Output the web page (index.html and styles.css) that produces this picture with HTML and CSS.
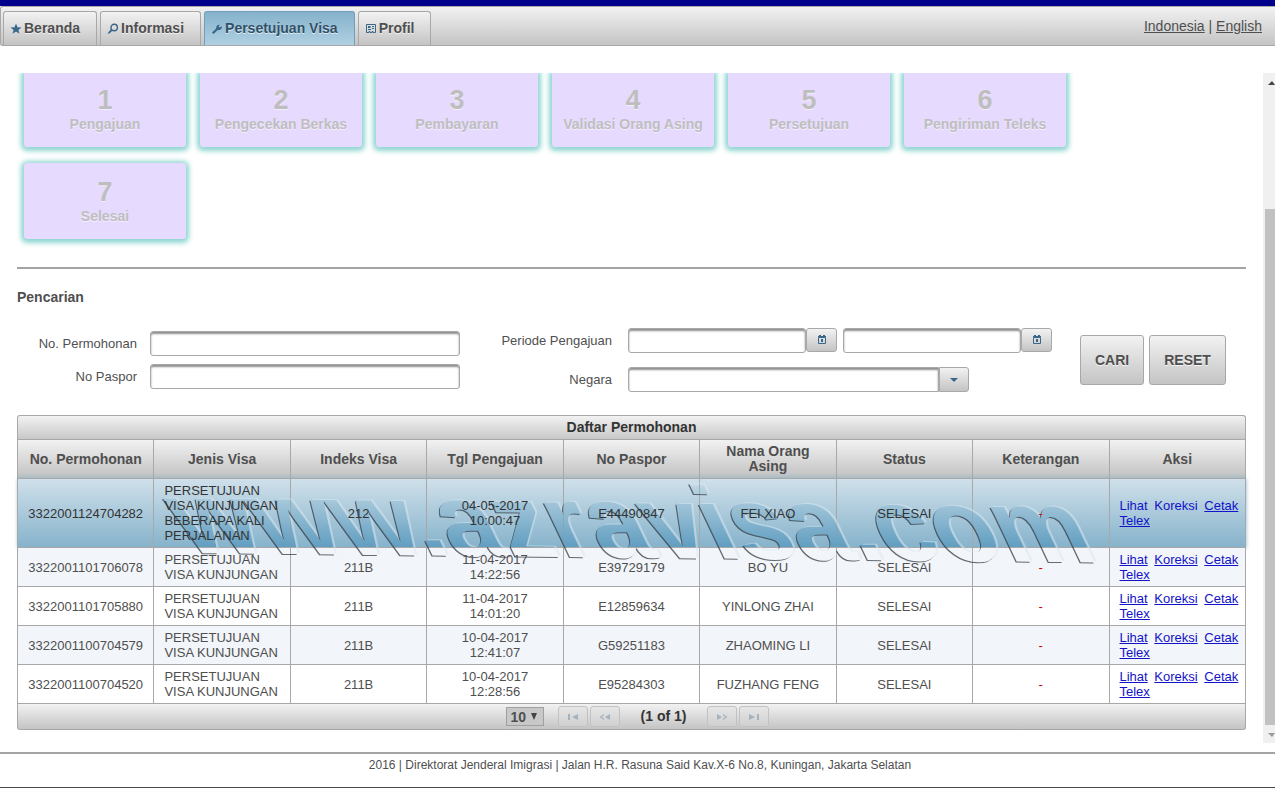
FILE: index.html
```html
<!DOCTYPE html>
<html lang="id">
<head>
<meta charset="utf-8">
<title>Persetujuan Visa</title>
<link rel="stylesheet" href="styles.css">
</head>
<body>
<div class="banner"></div>
<header class="menubar">
  <nav class="tabs">
    <a class="tab" href="#"><svg class="icon" viewBox="0 0 12 12"><path d="M6 0.5 7.5 4.2 11.5 4.4 8.4 6.9 9.5 10.8 6 8.6 2.5 10.8 3.6 6.9 0.5 4.4 4.5 4.2Z"/></svg>Beranda</a>
    <a class="tab" href="#"><svg class="icon" viewBox="0 0 12 12"><circle cx="7.2" cy="4.5" r="3.2" fill="none" stroke="#38678a" stroke-width="1.4"/><path d="M4 6 5.5 7.6 2.5 10.5 0.5 10.5Z"/></svg>Informasi</a>
    <a class="tab active" href="#" aria-current="page"><svg class="icon" viewBox="0 0 12 12"><path d="M1 9.5 5.2 5.6C4.8 3.5 6.3 1.4 8.8 1.8L7.6 3.4 8.8 4.5 11 3.2C11.2 6 9 7.5 6.8 7L2.5 11Z"/></svg>Persetujuan Visa</a>
    <a class="tab" href="#"><svg class="icon" viewBox="0 0 12 12"><path fill="none" stroke="#38678a" d="M1.5 1.5H10.500V9.500H8V8.500H7V9.500H5V8.500H4V9.500H1.500Z"/><path d="M3 3H5.500V5H3ZM3 6H6V7H3ZM7 3H9V4H7ZM7 5H9V6H7Z"/></svg>Profil</a>
  </nav>
  <div class="languages"><a href="#">Indonesia</a> | <a href="#">English</a></div>
</header>

<div class="viewport">
  <main class="content">
    <ol class="steps">
      <li class="step"><b>1</b><span>Pengajuan</span></li>
      <li class="step"><b>2</b><span>Pengecekan Berkas</span></li>
      <li class="step"><b>3</b><span>Pembayaran</span></li>
      <li class="step"><b>4</b><span>Validasi Orang Asing</span></li>
      <li class="step"><b>5</b><span>Persetujuan</span></li>
      <li class="step"><b>6</b><span>Pengiriman Teleks</span></li>
      <li class="step"><b>7</b><span>Selesai</span></li>
    </ol>
    <hr class="rule">
    <h2 class="heading">Pencarian</h2>
    <form class="search">
      <div class="fields fields-left">
        <label for="permohonan">No. Permohonan</label><input class="field" id="permohonan" type="text">
        <label for="paspor">No Paspor</label><input class="field" id="paspor" type="text">
      </div>
      <div class="fields fields-right">
        <label for="mulai">Periode Pengajuan</label>
        <div class="group">
          <input class="field date" id="mulai" type="text"><button class="trigger calendar" type="button" aria-label="Tanggal mulai"><svg viewBox="0 0 10 10"><path fill="none" stroke="#38678a" d="M1.500 2.500H8.500V8.500H1.500ZM1 1.500H9"/><path d="M2 0H4V2H2ZM6 0H8V2H6ZM4 4H6V7H4Z"/></svg></button>
          <input class="field date second" type="text" aria-label="Tanggal akhir"><button class="trigger calendar" type="button" aria-label="Pilih tanggal akhir"><svg viewBox="0 0 10 10"><path fill="none" stroke="#38678a" d="M1.500 2.500H8.500V8.500H1.500ZM1 1.500H9"/><path d="M2 0H4V2H2ZM6 0H8V2H6ZM4 4H6V7H4Z"/></svg></button>
        </div>
        <label for="negara">Negara</label>
        <div class="group">
          <input class="field combo" id="negara" type="text"><button class="trigger drop" type="button" aria-label="Buka daftar negara"><svg viewBox="0 0 10 10"><path d="M1 3H9L5 7Z"/></svg></button>
        </div>
      </div>
      <div class="actions">
        <button class="button" type="button">CARI</button>
        <button class="button" type="button">RESET</button>
      </div>
    </form>

    <section class="results">
      <table class="grid">
        <caption>Daftar Permohonan</caption>
        <thead>
          <tr><th>No. Permohonan</th><th>Jenis Visa</th><th>Indeks Visa</th><th>Tgl Pengajuan</th><th>No Paspor</th><th>Nama Orang Asing</th><th>Status</th><th>Keterangan</th><th>Aksi</th></tr>
        </thead>
        <tbody>
          <tr class="selected"><td>3322001124704282</td><td class="text">PERSETUJUAN VISA KUNJUNGAN BEBERAPA KALI PERJALANAN</td><td>212</td><td>04-05-2017 10:00:47</td><td>E44490847</td><td>FEI XIAO</td><td>SELESAI</td><td class="note">-</td><td class="links"><a class="plain" href="#">Lihat</a> <a class="plain" href="#">Koreksi</a> <a href="#">Cetak Telex</a></td></tr>
          <tr><td>3322001101706078</td><td class="text">PERSETUJUAN VISA KUNJUNGAN</td><td>211B</td><td>11-04-2017 14:22:56</td><td>E39729179</td><td>BO YU</td><td>SELESAI</td><td class="note">-</td><td class="links"><a href="#">Lihat</a> <a href="#">Koreksi</a> <a href="#">Cetak Telex</a></td></tr>
          <tr><td>3322001101705880</td><td class="text">PERSETUJUAN VISA KUNJUNGAN</td><td>211B</td><td>11-04-2017 14:01:20</td><td>E12859634</td><td>YINLONG ZHAI</td><td>SELESAI</td><td class="note">-</td><td class="links"><a href="#">Lihat</a> <a href="#">Koreksi</a> <a href="#">Cetak Telex</a></td></tr>
          <tr><td>3322001100704579</td><td class="text">PERSETUJUAN VISA KUNJUNGAN</td><td>211B</td><td>10-04-2017 12:41:07</td><td>G59251183</td><td>ZHAOMING LI</td><td>SELESAI</td><td class="note">-</td><td class="links"><a href="#">Lihat</a> <a href="#">Koreksi</a> <a href="#">Cetak Telex</a></td></tr>
          <tr><td>3322001100704520</td><td class="text">PERSETUJUAN VISA KUNJUNGAN</td><td>211B</td><td>10-04-2017 12:28:56</td><td>E95284303</td><td>FUZHANG FENG</td><td>SELESAI</td><td class="note">-</td><td class="links"><a href="#">Lihat</a> <a href="#">Koreksi</a> <a href="#">Cetak Telex</a></td></tr>
        </tbody>
      </table>
      <div class="pager">
        <div class="size"><select aria-label="Baris per halaman"><option>10</option></select><svg viewBox="0 0 8 8"><path d="M1 0H7L4 7Z"/></svg></div>
        <div class="pages">
          <button type="button" disabled aria-label="Halaman pertama"><svg viewBox="0 0 12 8"><path d="M1 1H3V7H1ZM11 1V7L5 4Z"/></svg></button>
          <button type="button" disabled aria-label="Sebelumnya"><svg viewBox="0 0 12 8"><path d="M11 1V7L6 4ZM5 1V2.500L2.500 4 5 5.500V7L0.500 4Z"/></svg></button>
        </div>
        <span class="count">(1 of 1)</span>
        <div class="pages">
          <button type="button" disabled aria-label="Berikutnya"><svg viewBox="0 0 12 8"><path d="M1 1V7L6 4ZM7 1V2.500L9.500 4 7 5.500V7L11.500 4Z"/></svg></button>
          <button type="button" disabled aria-label="Halaman terakhir"><svg viewBox="0 0 12 8"><path d="M11 1H9V7H11ZM1 1V7L7 4Z"/></svg></button>
        </div>
      </div>
      <svg class="watermark" width="1060" height="140" viewBox="0 0 1060 140">
        <defs>
          <linearGradient id="tint" x1="0" y1="0" x2="0" y2="1">
            <stop offset="0" stop-color="#8fbcd4" stop-opacity=".2"/>
            <stop offset="1" stop-color="#5597bd" stop-opacity=".75"/>
          </linearGradient>
          <clipPath id="letters">
            <text class="mark" transform="translate(65 95) rotate(.6) skewX(26)">www.azravisa.com</text>
          </clipPath>
          <filter id="emboss" x="-5%" y="-30%" width="110%" height="160%" color-interpolation-filters="sRGB">
            <feOffset in="SourceAlpha" dx="-1" dy="1" result="low"/>
            <feComposite in="low" in2="SourceAlpha" operator="out" result="lowEdge"/>
            <feFlood flood-color="#26313a" flood-opacity=".7"/>
            <feComposite in2="lowEdge" operator="in" result="dark"/>
            <feOffset in="SourceAlpha" dx="2" dy="-1" result="high"/>
            <feComposite in="high" in2="SourceAlpha" operator="out" result="highEdge"/>
            <feFlood flood-color="#d8e8f2" flood-opacity=".5"/>
            <feComposite in2="highEdge" operator="in" result="light"/>
            <feMerge><feMergeNode in="light"/><feMergeNode in="dark"/></feMerge>
          </filter>
        </defs>
        <rect y="28" width="1060" height="61" fill="url(#tint)" clip-path="url(#letters)"/>
        <g filter="url(#emboss)">
          <text class="mark" transform="translate(65 95) rotate(.6) skewX(26)">www.azravisa.com</text>
        </g>
      </svg>
    </section>
  </main>
  <div class="scrollbar" aria-hidden="true">
    <svg viewBox="0 0 12 12"><path fill="#444" d="M5 9H12L9 5Z"/></svg>
    <div class="thumb"></div>
    <svg viewBox="0 0 12 12"><path fill="#999" d="M5 5H12L9 9Z"/></svg>
  </div>
</div>
<footer class="footer">2016 | Direktorat Jenderal Imigrasi | Jalan H.R. Rasuna Said Kav.X-6 No.8, Kuningan, Jakarta Selatan</footer>
</body>
</html>
```

FILE: styles.css
```css
* { box-sizing: border-box; }
body {
  margin: 0;
  min-height: 100vh;
  display: flex;
  flex-direction: column;
  background: #fff;
  color: #4f4f4f;
  font: 13px/15px "Liberation Sans", Arial, sans-serif;
}
svg { fill: #38678a; }
.banner { height: 6px; background: #00008b; }
.menubar {
  height: 40px;
  display: flex;
  justify-content: space-between;
  padding: 4px 13px 0 2px;
  border: 1px solid #a8a8a8;
  border-width: 1px 0 1px 1px;
  border-radius: 3px 0 0 3px;
  background: linear-gradient(#f2f2f2, #c4c4c4);
}
.tabs { display: flex; gap: 3px; }
.tab {
  display: flex;
  align-items: center;
  gap: 2px;
  padding: 0 16px 0 6px;
  border: 1px solid #a8a8a8;
  border-bottom: 0;
  border-radius: 3px 3px 0 0;
  background: linear-gradient(#f2f2f2, #c4c4c4);
  color: #4f4f4f;
  font-size: 14px;
  font-weight: bold;
  text-decoration: none;
  text-shadow: 0 1px 0 rgba(255, 255, 255, .7);
}
.tab.active { border-color: #6f9fba; background: linear-gradient(#85b2cb, #b0d0e2); color: #2f5068; }
.icon { width: 12px; height: 12px; }
.languages { padding-top: 7px; font-size: 14px; line-height: 16px; }
.languages a { color: inherit; }

.viewport { display: flex; margin-top: 27px; overflow: hidden; }
.content { flex: 1; margin-top: -2px; padding: 0 17px 13px; }
.steps {
  display: grid;
  grid-template-columns: repeat(6, 162px);
  gap: 16px 14px;
  margin: 0;
  padding: 0 7px;
  list-style: none;
}
.step {
  height: 76px;
  display: flex;
  flex-direction: column;
  align-items: center;
  padding-top: 14px;
  border-radius: 3px;
  background: #e6dafe;
  box-shadow: 0 1px 5px 3px #8fd6d1;
  color: #bebebe;
  font-size: 14px;
  font-weight: bold;
  line-height: 18px;
  text-shadow: 0 1px 0 rgba(255, 255, 255, .6);
}
.step b { font-size: 27px; line-height: 30px; }
.step span { white-space: nowrap; }
.rule { height: 2px; margin: 28px 0 20px; border: 0; background: #a4a4a4; }
.heading { margin: 0; font-size: 14px; line-height: 16px; }

.search { display: flex; padding-top: 23px; }
.fields { display: grid; align-items: center; align-content: start; text-align: right; }
.fields-left { grid-template-columns: 120px 310px; gap: 8px 13px; padding-top: 3px; }
.fields-right { grid-template-columns: 139px auto; gap: 14px 16px; margin-left: 13px; }
.group { display: flex; }
.field {
  width: 100%;
  height: 25px;
  padding: 2px 6px;
  border: 1px solid #a8a8a8;
  border-radius: 3px;
  background: #fff;
  box-shadow: inset 0 2px 2px #8f8f8f;
  font: inherit;
}
.date { width: 178px; }
.second { margin-left: 6px; }
.combo { width: 311px; border-radius: 3px 0 0 3px; }
.trigger, .button {
  border: 1px solid #a8a8a8;
  border-radius: 3px;
  background: linear-gradient(#f2f2f2, #c4c4c4);
}
.trigger { width: 31px; height: 24px; display: grid; place-items: center; padding: 0; }
.trigger svg { width: 10px; height: 10px; }
.drop { width: 30px; height: 25px; border-radius: 0 3px 3px 0; }
.actions { display: flex; gap: 5px; margin: 7px 0 0 28px; }
.button {
  height: 50px;
  padding: 0 14px;
  color: #4f4f4f;
  font: bold 14px/16px "Liberation Sans", Arial, sans-serif;
  text-shadow: 0 1px 0 rgba(255, 255, 255, .8);
}

.results { position: relative; z-index: 0; margin-top: 23px; }
.grid { width: 100%; border-collapse: collapse; table-layout: fixed; }
.grid caption {
  height: 24px;
  padding-top: 3px;
  border: 1px solid #a8a8a8;
  border-bottom: 0;
  border-radius: 3px 3px 0 0;
  background: linear-gradient(#f2f2f2, #c8c8c8);
  color: #333;
  font-size: 14px;
  font-weight: bold;
  line-height: 16px;
}
.grid th, .grid td { border: 1px solid #a8a8a8; padding: 4px 10px; text-align: center; }
/* Cell text stays above the watermark, row backgrounds below it. */
.grid td { position: relative; z-index: 1; }
.grid th { height: 39px; font-size: 14px; line-height: 15px; padding: 3px 10px; }
.grid thead tr { background: linear-gradient(#f2f2f2, #c8c8c8 84%, #aebdc4); }
.grid tbody tr:nth-child(even) { background: #f2f5f9; }
.grid tbody .selected { background: linear-gradient(#cfe0ea, #85b2cb); color: #333; box-shadow: 0 0 4px #85b2cb; }
.grid .text, .grid .links { text-align: left; }
.grid .links { padding-right: 5px; word-spacing: 3px; }
.grid .note { color: #c00; }
.links a { color: #1212c8; }
.links .plain { text-decoration: none; }

.pager {
  height: 26px;
  display: flex;
  align-items: center;
  justify-content: center;
  padding-left: 12px;
  border: 1px solid #a8a8a8;
  border-top: 0;
  border-radius: 0 0 3px 3px;
  background: linear-gradient(#f2f2f2, #c4c4c4);
}
.size { display: grid; grid-template-columns: 24px 14px; align-items: center; margin-right: 14px; }
.size select {
  grid-area: 1 / 1 / 2 / 3;
  height: 19px;
  appearance: none;
  padding: 0 4px;
  border: 1px solid #a0a0a0;
  border-radius: 0;
  background: #c8c8c8;
  color: #4f4f4f;
  font: bold 14px/16px "Liberation Sans", Arial, sans-serif;
}
.size svg { grid-area: 1 / 2; width: 8px; height: 8px; fill: #444; pointer-events: none; }
.pages { display: flex; gap: 2px; }
.pages button {
  width: 30px;
  height: 21px;
  display: grid;
  place-items: center;
  padding: 0;
  border: 1px solid #c2c2c2;
  border-radius: 3px;
  background: linear-gradient(#e6e6e6, #d0d0d0);
}
.pages svg { width: 12px; height: 8px; fill: #a3b3bf; }
.count { padding: 0 21px; color: #333; font-size: 14px; font-weight: bold; }

.watermark { position: absolute; z-index: 0; left: 107px; top: 43px; pointer-events: none; }
.mark { font: bold 103px "Liberation Sans", Arial, sans-serif; }

.scrollbar { width: 12px; display: flex; flex-direction: column; background: #f0f0f0; }
.scrollbar svg { flex: none; width: 12px; height: 18px; }
.thumb { flex: 1; margin: 118px 0 0 2px; background: #c1c1c1; }

.footer {
  flex: 1;
  margin-top: 9px;
  padding: 4px 0 0 5px;
  border-top: 2px solid #a4a4a4;
  border-bottom: 1px solid #4a4a4a;
  font-size: 12px;
  text-align: center;
}
```
